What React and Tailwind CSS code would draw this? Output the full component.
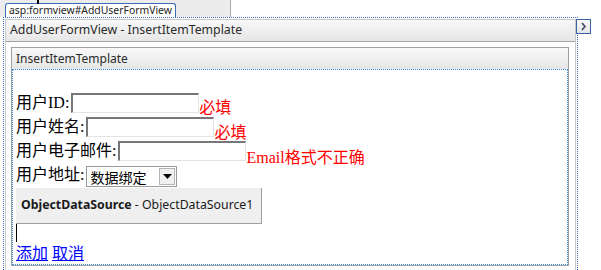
const field = "h-[20px] bg-white border-t-2 border-l-2 border-[#777777] border-r border-b border-r-[#e4e4e4] border-b-[#e4e4e4]";

const FormRow = ({ label, error, errorTop }) => (
  <div className="flex items-start h-[24px] whitespace-nowrap">
    <span className="leading-[20px] mt-[1px]">{label}</span>
    <div className={`${field} w-[128px] ml-[2px] mt-[1px]`} />
    {error && (
      <span className={`text-[#ff0000] leading-[20px] ${errorTop}`}>{error}</span>
    )}
  </div>
);

const App = () => {
  return (
    <div className="w-[601px] h-[270px] overflow-hidden bg-white relative font-['Noto_Sans',sans-serif]">
      <div className="absolute top-0 left-[37px] w-[2px] h-[4px] bg-black" />

      <div className="h-[17px] w-[231px] bg-[#ececec] border-r border-[#a8a8a8] pl-[5px] pt-[3px] flex">
        <div className="h-[14px] px-[3px] border border-b-0 border-[#3b6bb5] rounded-t-[3px] bg-white text-[10.4px] leading-[12px] text-[#222] whitespace-nowrap">
          asp:formview#AddUserFormView
        </div>
      </div>

      <div className="ml-[3px] w-[575px] h-[253px] border border-dotted border-[#3a6cc4] border-b-0 pt-[1px] pl-[1px]">
        <div className="w-[571px] h-full border border-[#c8c8c8] border-b-0 flex flex-col">
          <div className="h-[22px] border-b border-[#a0a0a0] bg-gradient-to-b from-[#f8f8f8] to-[#e6e6e6] pl-[4px] flex items-center text-[12.3px] text-[#2a2a2a]">
            AddUserFormView - InsertItemTemplate
          </div>

          <div className="pt-[5px] pl-[5px]">
            <div className="w-[558px] h-[219px] border border-[#a0a0a0] flex flex-col">
              <div className="h-[21px] bg-gradient-to-b from-[#f8f8f8] to-[#e6e6e6] pl-[4px] flex items-center text-[12px] text-[#2a2a2a]">
                InsertItemTemplate
              </div>

              <div className="flex-1 border border-dotted border-[#3d8ee8] pl-[3px] pt-[22px] text-[16px] text-black font-['Liberation_Serif','Noto_Sans_CJK_SC',serif]">
                <FormRow label="用户ID:" error="必填" errorTop="mt-[6px]" />
                <FormRow label="用户姓名:" error="必填" errorTop="mt-[7px]" />
                <FormRow label="用户电子邮件:" error="Email格式不正确" errorTop="mt-[8px]" />

                <div className="flex items-start h-[24px] whitespace-nowrap">
                  <span className="leading-[20px] mt-[1px]">用户地址:</span>
                  <div className="ml-[2px] mt-[2px] w-[91px] h-[21px] border border-[#9a9a9a] bg-white flex items-center">
                    <span className="flex-1 pl-[3px] text-[14px] leading-[18px] font-['Noto_Sans_CJK_SC',sans-serif]">数据绑定</span>
                    <div className="w-[16px] h-[17px] mr-[1px] bg-[#f0f0f0] border border-[#b5b5b5] flex items-center justify-center">
                      <svg width="9" height="5" viewBox="0 0 9 5">
                        <polygon points="0,0 9,0 4.5,5" fill="#000" />
                      </svg>
                    </div>
                  </div>
                </div>

                <div className="w-[246px] h-[36px] bg-[#efefef] border-r border-b border-[#a0a0a0] pl-[5px] flex items-center whitespace-nowrap text-[12.3px] text-[#1a1a1a] font-['Noto_Sans',sans-serif]">
                  <span className="font-bold">ObjectDataSource</span>
                  <span>&nbsp;- ObjectDataSource1</span>
                </div>

                <div className="w-px h-[18px] bg-black" />

                <div className="mt-[1px] flex gap-[4px] leading-[18px] text-[#0000ff] font-['Noto_Sans_CJK_SC',sans-serif]">
                  <a href="#" className="underline">添加</a>
                  <a href="#" className="underline">取消</a>
                </div>
              </div>
            </div>
          </div>
        </div>
      </div>

      <div className="absolute left-[576px] top-[19px] w-[15px] h-[15px] border border-[#3a64a8] bg-gradient-to-b from-[#fafafa] to-[#e4e4e4] flex items-center justify-center">
        <svg width="7" height="9" viewBox="0 0 7 9">
          <polyline points="2,1 5,4.5 2,8" fill="none" stroke="#3b4a66" strokeWidth="1.6" />
        </svg>
      </div>
    </div>
  );
};

export default App;
